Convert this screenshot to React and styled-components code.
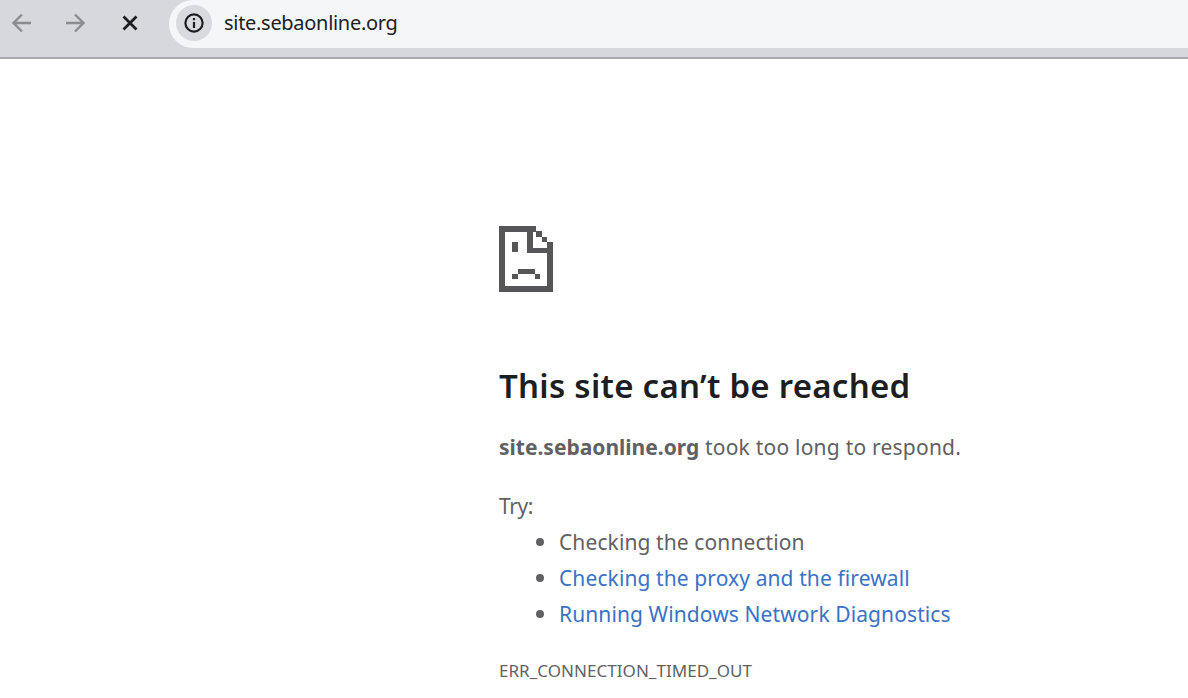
import styled, { createGlobalStyle } from 'styled-components'

const GlobalStyle = createGlobalStyle`
html, body {
    margin: 0;
    padding: 0;
    background: #fff;
}
body {
    font-family: "Noto Sans", "Open Sans", sans-serif;
}
`

const Page = styled.div`
width: 1188px;
height: 698px;
overflow: hidden;
`

const Toolbar = styled.header`
display: flex;
height: 57px;
background: #d7d8dd;
border-bottom: 2px solid #a9aaad;
`

const NavButtons = styled.nav`
display: flex;
width: 169px;
height: 46px;
padding-left: 2px;
box-sizing: border-box;
`

const NavButton = styled.span`
display: flex;
align-items: center;
justify-content: center;
width: ${p => p.$width}px;
height: 100%;
color: ${p => (p.$active ? '#1c1d1f' : '#8b8c8f')};
`

const Omnibox = styled.div`
flex: 1;
display: flex;
align-items: center;
height: 48px;
padding-left: 7px;
background: #f5f6f8;
border-radius: 24px 0 0 24px;
box-sizing: border-box;
`

const InfoChip = styled.span`
display: flex;
align-items: center;
justify-content: center;
width: 36px;
height: 36px;
margin-top: -2px;
border-radius: 50%;
background: #d9dadf;
color: #1c1d1f;
`

const Url = styled.span`
margin: -4px 0 0 12px;
font-size: 20px;
color: #202124;
letter-spacing: -0.3px;
`

const Content = styled.main`
width: 520px;
margin-left: 499px;
padding-top: 167px;
`

const SadTab = styled.svg`
display: block;
width: 54px;
height: 66px;
color: #555658;
`

const Title = styled.h1`
margin: 69px 0 0;
font-size: 33px;
font-weight: 600;
line-height: 50px;
color: #1d1e21;
letter-spacing: 0.27px;
`

const Message = styled.p`
margin: 18px 0 0;
font-size: 21px;
line-height: 36px;
color: #5f6164;
letter-spacing: 0.22px;

strong {
    font-weight: 700;
    letter-spacing: 0;
}
`

const TryLabel = styled(Message)`
margin-top: 23px;
letter-spacing: -0.4px;
`

const Suggestions = styled.ul`
margin: 0;
padding: 0 0 0 60px;
list-style: none;
font-size: 21px;
line-height: 36px;
color: #5f6164;
letter-spacing: 0.1px;
`

const Suggestion = styled.li`
position: relative;

&::before {
    content: "";
    position: absolute;
    left: -23px;
    top: 14px;
    width: 8px;
    height: 8px;
    border-radius: 50%;
    background: #5f6164;
}
`

const Link = styled.a`
color: #3a72c5;
text-decoration: none;
`

const ErrorCode = styled.div`
margin-top: 27px;
font-size: 17px;
line-height: 24px;
color: #606265;
letter-spacing: 0.04px;
`

function ArrowLeft() {
    return (
        <svg width="24" height="24" viewBox="0 0 24 24" fill="none" stroke="currentColor" strokeWidth="2.4">
            <path d="M21 12H4M12 3.5 3.5 12l8.5 8.5" />
        </svg>
    )
}

function ArrowRight() {
    return (
        <svg width="24" height="24" viewBox="0 0 24 24" fill="none" stroke="currentColor" strokeWidth="2.4">
            <path d="M3 12h17M12 3.5l8.5 8.5-8.5 8.5" />
        </svg>
    )
}

function Close() {
    return (
        <svg width="24" height="24" viewBox="0 0 24 24" fill="none" stroke="currentColor" strokeWidth="2.8">
            <path d="M5.5 5.5l13 13M18.5 5.5l-13 13" />
        </svg>
    )
}

function Info() {
    return (
        <svg width="24" height="24" viewBox="0 0 24 24" fill="none" stroke="currentColor">
            <circle cx="12" cy="12" r="8.6" strokeWidth="2.2" />
            <path d="M12 11v6" strokeWidth="2.2" />
            <path d="M12 7v2.2" strokeWidth="2.2" />
        </svg>
    )
}

function SadTabIcon() {
    return (
        <SadTab viewBox="0 0 54 66" fill="currentColor">
            <path d="M0 0h37v6H6v54h42V27H28V0h6v22h20v44H0z" />
            <path d="M37 5h6v6h-6zM43 11h5v5h-5zM48 16h6v6h-6z" />
            <path d="M13 16h6v10h-6zM19 43h17v5H19zM13 48h6v5h-6zM36 48h5v5h-5z" />
        </SadTab>
    )
}

export default function App() {
    return (
        <Page>
            <GlobalStyle />
            <Toolbar>
                <NavButtons>
                    <NavButton $width={40}><ArrowLeft /></NavButton>
                    <NavButton $width={66}><ArrowRight /></NavButton>
                    <NavButton $width={43} $active><Close /></NavButton>
                </NavButtons>
                <Omnibox>
                    <InfoChip><Info /></InfoChip>
                    <Url>site.sebaonline.org</Url>
                </Omnibox>
            </Toolbar>
            <Content>
                <SadTabIcon />
                <Title>This site can’t be reached</Title>
                <Message><strong>site.sebaonline.org</strong> took too long to respond.</Message>
                <TryLabel>Try:</TryLabel>
                <Suggestions>
                    <Suggestion>Checking the connection</Suggestion>
                    <Suggestion><Link href="#">Checking the proxy and the firewall</Link></Suggestion>
                    <Suggestion><Link href="#">Running Windows Network Diagnostics</Link></Suggestion>
                </Suggestions>
                <ErrorCode>ERR_CONNECTION_TIMED_OUT</ErrorCode>
            </Content>
        </Page>
    )
}
